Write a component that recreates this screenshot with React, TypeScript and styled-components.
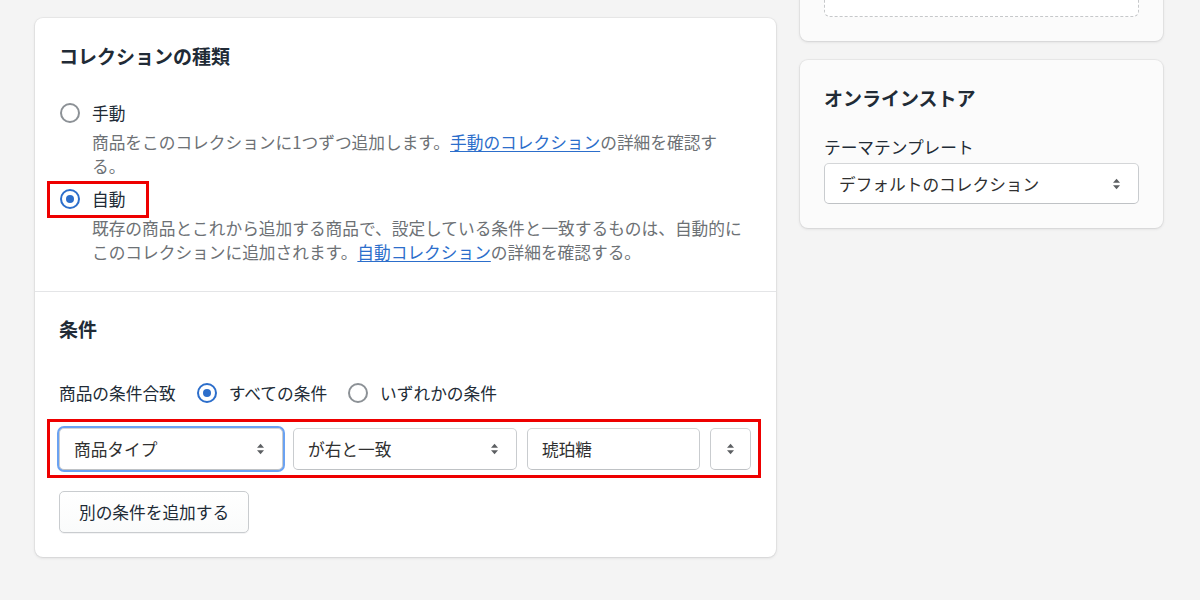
import React from "react";
import styled, { createGlobalStyle } from "styled-components";

const GlobalStyle = createGlobalStyle`
  html, body {
    margin: 0;
    padding: 0;
    background: #f4f4f4;
  }
  body {
    font-family: "Noto Sans CJK JP", "Noto Sans", "Liberation Sans", sans-serif;
    font-size: 16.7px;
    line-height: 24px;
    color: #212b36;
  }
`;

const Page = styled.div`
  display: flex;
  align-items: flex-start;
  gap: 24px;
  padding: 18px 0 0 35px;
  height: 600px;
  box-sizing: border-box;
  overflow: hidden;
`;

const Card = styled.div<{ $muted?: boolean }>`
  background: ${(p) => (p.$muted ? "#fbfbfb" : "#ffffff")};
  border-radius: 8px;
  box-shadow: 0 0 0 1px rgba(63, 63, 68, 0.05), 0 1px 3px 0 rgba(63, 63, 68, 0.15);
`;

const MainCard = styled(Card)`
  width: 741px;
`;

const Section = styled.div<{ $divided?: boolean }>`
  padding: ${(p) => (p.$divided ? "23px 24px 24px" : "24px 24px 27px")};
  border-top: ${(p) => (p.$divided ? "1px solid #e4e5e7" : "none")};
`;

const Heading = styled.h2`
  margin: 0;
  font-size: 19px;
  line-height: 28px;
  font-weight: 700;
  color: #212b36;
`;

const RadioList = styled.div`
  margin-top: 31px;
  display: flex;
  flex-direction: column;
  gap: 9px;
`;

const RadioItem = styled.div``;

const RadioRow = styled.label`
  position: relative;
  display: flex;
  width: fit-content;
  align-items: center;
  gap: 12px;
  padding-left: 1px;
  height: 24px;
  cursor: pointer;
`;

const Circle = styled.span<{ $checked?: boolean }>`
  box-sizing: border-box;
  width: 20px;
  height: 20px;
  border-radius: 50%;
  border: 2px solid ${(p) => (p.$checked ? "#2c6ecb" : "#8c9196")};
  background: #fff;
  display: flex;
  align-items: center;
  justify-content: center;
  flex-shrink: 0;
  &::after {
    content: "";
    width: 8px;
    height: 8px;
    border-radius: 50%;
    background: ${(p) => (p.$checked ? "#2c6ecb" : "transparent")};
  }
`;

const LabelText = styled.span`
  line-height: 24px;
  color: #212b36;
`;

const Description = styled.p`
  margin: 5px 0 0;
  padding-left: 33px;
  max-width: 656px;
  color: #6d7175;
  line-height: 24px;
`;

const Link = styled.a`
  color: #2c6ecb;
  text-decoration: underline;
  text-underline-offset: 2px;
`;

const Highlight = styled.span<{ $inset: string }>`
  position: absolute;
  inset: ${(p) => p.$inset};
  border: 3px solid #ee0000;
  pointer-events: none;
`;

const MatchRow = styled.div`
  margin-top: 38px;
  display: flex;
  align-items: center;
  gap: 20px;
  height: 24px;
`;

const MatchLabel = styled.span`
  color: #212b36;
`;

const ConditionWrap = styled.div`
  position: relative;
  margin-top: 23px;
`;

const ConditionRow = styled.div`
  display: flex;
  gap: 10px;
`;

const Field = styled.div<{ $width: number; $focused?: boolean; $center?: boolean }>`
  box-sizing: border-box;
  width: ${(p) => p.$width}px;
  height: 42px;
  display: flex;
  align-items: center;
  justify-content: ${(p) => (p.$center ? "center" : "space-between")};
  padding: ${(p) => (p.$center ? "0" : "0 17px 0 14px")};
  background: #fff;
  border: 1px solid #c9cccf;
  border-top-color: #d4d6d8;
  border-bottom-color: #bfc2c5;
  border-radius: 5px;
  color: #303030;
  box-shadow: ${(p) => (p.$focused ? "0 0 0 2px #6aa2f2" : "none")};
`;

const FieldText = styled.span`
  white-space: nowrap;
`;

const AddButton = styled.button`
  display: block;
  margin-top: 21px;
  height: 42px;
  padding: 0 19px;
  font: inherit;
  color: #212b36;
  background: linear-gradient(#ffffff, #fafbfb);
  border: 1px solid #c9cccf;
  border-radius: 5px;
  box-shadow: 0 1px 0 rgba(22, 29, 37, 0.05);
  cursor: pointer;
`;

const SideColumn = styled.div`
  width: 363px;
  margin-top: -102px;
  display: flex;
  flex-direction: column;
  gap: 19px;
`;

const SideCard = styled(Card)`
  padding: 24px;
`;

const DashedBox = styled.div`
  height: 75px;
  border: 1px dashed #c6c8ca;
  border-radius: 6px;
  background: #fff;
`;

const SideLabel = styled.div`
  margin-top: 23px;
  color: #212b36;
`;

const SideSelect = styled(Field)`
  margin-top: 4px;
  height: 41px;
`;

function Arrows() {
  return (
    <svg width="9" height="12" viewBox="0 0 9 12" aria-hidden="true">
      <path d="M4.5 0.8 L8 4.8 H1 Z" fill="#5c5f62" />
      <path d="M4.5 11.2 L8 7.2 H1 Z" fill="#5c5f62" />
    </svg>
  );
}

function Radio({ checked, label }: { checked?: boolean; label: string }) {
  return (
    <RadioRow>
      <Circle $checked={checked} />
      <LabelText>{label}</LabelText>
    </RadioRow>
  );
}

export default function App() {
  return (
    <>
      <GlobalStyle />
      <Page>
        <MainCard>
          <Section>
            <Heading>コレクションの種類</Heading>
            <RadioList>
              <RadioItem>
                <Radio label="手動" />
                <Description>
                  商品をこのコレクションに1つずつ追加します。
                  <Link href="#">手動のコレクション</Link>の詳細を確認する。
                </Description>
              </RadioItem>
              <RadioItem>
                <RadioRow>
                  <Circle $checked />
                  <LabelText>自動</LabelText>
                  <Highlight $inset="-6px -24px -7px -12px" />
                </RadioRow>
                <Description>
                  既存の商品とこれから追加する商品で、設定している条件と一致するものは、自動的にこのコレクションに追加されます。
                  <Link href="#">自動コレクション</Link>の詳細を確認する。
                </Description>
              </RadioItem>
            </RadioList>
          </Section>
          <Section $divided>
            <Heading>条件</Heading>
            <MatchRow>
              <MatchLabel>商品の条件合致</MatchLabel>
              <Radio checked label="すべての条件" />
              <Radio label="いずれかの条件" />
            </MatchRow>
            <ConditionWrap>
              <ConditionRow>
                <Field $width={224} $focused>
                  <FieldText>商品タイプ</FieldText>
                  <Arrows />
                </Field>
                <Field $width={224}>
                  <FieldText>が右と一致</FieldText>
                  <Arrows />
                </Field>
                <Field $width={173}>
                  <FieldText>琥珀糖</FieldText>
                </Field>
                <Field $width={41} $center>
                  <Arrows />
                </Field>
              </ConditionRow>
              <Highlight $inset="-9px -9px -8px -12px" />
            </ConditionWrap>
            <AddButton type="button">別の条件を追加する</AddButton>
          </Section>
        </MainCard>
        <SideColumn>
          <SideCard $muted>
            <DashedBox />
          </SideCard>
          <SideCard $muted>
            <Heading>オンラインストア</Heading>
            <SideLabel>テーマテンプレート</SideLabel>
            <SideSelect $width={315}>
              <FieldText>デフォルトのコレクション</FieldText>
              <Arrows />
            </SideSelect>
          </SideCard>
        </SideColumn>
      </Page>
    </>
  );
}
